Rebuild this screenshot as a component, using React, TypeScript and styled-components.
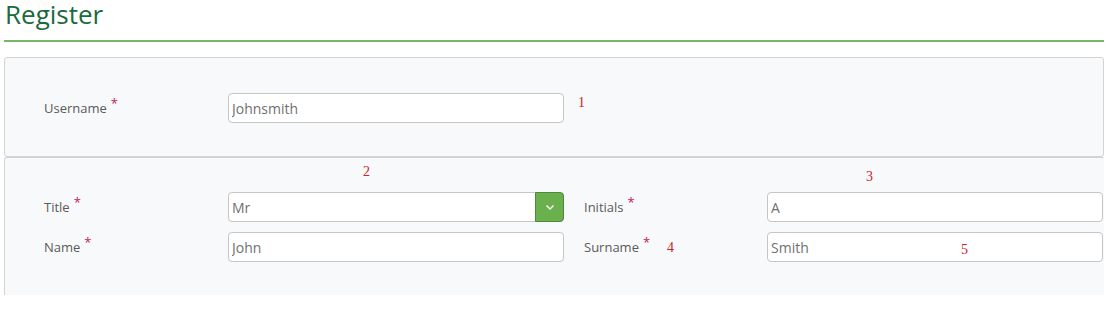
import React from "react";
import styled, { createGlobalStyle } from "styled-components";

const GlobalStyle = createGlobalStyle`
  body {
    margin: 0;
    background: #ffffff;
    font-family: "Open Sans", "Noto Sans", sans-serif;
  }
`;

const Page = styled.div`
  width: 1100px;
  padding: 0 14px 0 4px;
`;

const Header = styled.div`
  height: 40px;
  border-bottom: 2px solid #7ab36a;
`;

const Title = styled.h1`
  margin: 0;
  padding: 1px 0 0 1px;
  font-size: 26px;
  line-height: 26px;
  font-weight: 400;
  color: #1b6a3d;
`;

const Panel = styled.div<{ $first?: boolean }>`
  position: relative;
  background: #f8f9fb;
  border: 1px solid #d3d3d3;
  border-radius: 3px;
  margin-top: ${(p) => (p.$first ? "15px" : "0")};
  padding: ${(p) => (p.$first ? "35px 0 33px 39px" : "34px 0 33px 39px")};
  ${(p) =>
    !p.$first &&
    `
    border-right-color: transparent;
    border-bottom: none;
    border-radius: 3px 0 0 0;
  `}
`;

const Grid = styled.div<{ $cols: string }>`
  display: grid;
  grid-template-columns: ${(p) => p.$cols};
  row-gap: 10px;
  align-items: center;
`;

const Label = styled.div<{ $inset?: boolean }>`
  font-size: 13px;
  color: #5a5a5a;
  padding-left: ${(p) => (p.$inset ? "20px" : "0")};
`;

const Req = styled.span`
  color: #c2185b;
  font-size: 13px;
  margin-left: 4px;
  position: relative;
  top: -5px;
`;

const Input = styled.input`
  box-sizing: border-box;
  width: 100%;
  height: 30px;
  border: 1px solid #c6c6c6;
  border-radius: 4px;
  background: #ffffff;
  padding: 0 3px;
  font-family: "Open Sans", "Noto Sans", sans-serif;
  font-size: 14px;
  color: #707070;
  outline: none;
`;

const SelectBox = styled.div`
  box-sizing: border-box;
  height: 30px;
  display: flex;
  align-items: stretch;
  border: 1px solid #c6c6c6;
  border-radius: 4px;
  background: #ffffff;
`;

const SelectValue = styled.div`
  flex: 1;
  display: flex;
  align-items: center;
  padding: 0 3px;
  font-size: 14px;
  color: #707070;
`;

const SelectButton = styled.div`
  width: 27px;
  margin: -1px -1px -1px 0;
  display: flex;
  align-items: center;
  justify-content: center;
  background: #6ab04c;
  border: 1px solid #4d8a3a;
  border-radius: 0 4px 4px 0;
`;

const Note = styled.span`
  font-family: "Liberation Serif", serif;
  font-size: 14px;
  color: #d0202a;
  padding-left: 14px;
  margin-top: -10px;
`;

const Mark = styled.span<{ $x: number; $y: number }>`
  position: absolute;
  left: ${(p) => p.$x}px;
  top: ${(p) => p.$y}px;
  font-family: "Liberation Serif", serif;
  font-size: 14px;
  line-height: 14px;
  color: #d0202a;
`;

const Chevron = () => (
  <svg width="10" height="7" viewBox="0 0 10 7">
    <path d="M1.5 1.5 L5 5 L8.5 1.5" fill="none" stroke="#ffffff" strokeWidth="1.4" />
  </svg>
);

const Field: React.FC<{ label: string; inset?: boolean }> = ({ label, inset }) => (
  <Label $inset={inset}>
    {label}
    <Req>*</Req>
  </Label>
);

export default function App() {
  return (
    <>
      <GlobalStyle />
      <Page>
        <Header>
          <Title>Register</Title>
        </Header>
        <Panel $first>
          <Grid $cols="184px 336px auto">
            <Field label="Username" />
            <Input defaultValue="Johnsmith" />
            <Note>1</Note>
          </Grid>
        </Panel>
        <Panel>
          <Mark $x={358} $y={7}>2</Mark>
          <Mark $x={861} $y={12}>3</Mark>
          <Mark $x={662} $y={83}>4</Mark>
          <Mark $x={956} $y={85}>5</Mark>
          <Grid $cols="184px 336px 203px 336px">
            <Field label="Title" />
            <SelectBox>
              <SelectValue>Mr</SelectValue>
              <SelectButton>
                <Chevron />
              </SelectButton>
            </SelectBox>
            <Field label="Initials" inset />
            <Input defaultValue="A" />
            <Field label="Name" />
            <Input defaultValue="John" />
            <Field label="Surname" inset />
            <Input defaultValue="Smith" />
          </Grid>
        </Panel>
      </Page>
    </>
  );
}
